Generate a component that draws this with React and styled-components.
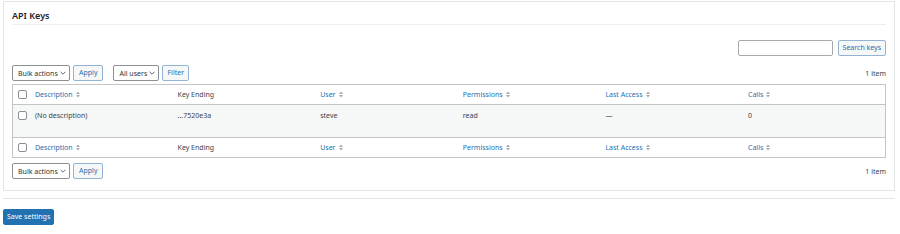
import React from 'react';
import styled, { createGlobalStyle } from 'styled-components';

const GlobalStyle = createGlobalStyle`
  html, body {
    margin: 0;
    padding: 0;
    background: #ffffff;
  }
  body {
    font-family: "Noto Sans", "Open Sans", sans-serif;
    font-size: 7px;
    color: #3c434a;
  }
  * { box-sizing: border-box; }
`;

// STYLES
const Page = styled.div`
  width: 900px;
  padding: 1px 5px 0 3px;
`;

const Panel = styled.div`
  border: 1px solid #e2e4e7;
  background: #ffffff;
  padding: 0 8px 10px 8px;
  height: 190px;
`;

const Heading = styled.h2`
  margin: 0;
  padding: 9px 0 3px 0;
  font-size: 9px;
  font-weight: 600;
  color: #1d2327;
  line-height: 10px;
  border-bottom: 1px solid #eceef0;
`;

const SearchRow = styled.div`
  display: flex;
  justify-content: flex-end;
  gap: 5px;
  margin-top: 15px;
`;

const SearchInput = styled.div`
  width: 95px;
  height: 16px;
  border: 1px solid #a7aaad;
  border-radius: 2px;
  background: #fff;
`;

const Button = styled.button`
  height: 16px;
  padding: 0 ${(p) => p.$pad || 4}px;
  border: 1px solid #93b3d3;
  border-radius: 2px;
  background: #f6f7f7;
  color: #2271b1;
  font-family: inherit;
  font-size: 7px;
  line-height: 14px;
  cursor: pointer;
`;

const PrimaryButton = styled(Button)`
  background: #2271b1;
  border-color: #2271b1;
  color: #ffffff;
`;

const TableNav = styled.div`
  display: flex;
  align-items: center;
  height: 16px;
  margin-top: ${(p) => p.$top}px;
`;

const Group = styled.div`
  display: flex;
  gap: 3px;
  margin-right: 10px;
`;

const Select = styled.div`
  display: flex;
  align-items: center;
  justify-content: space-between;
  width: ${(p) => p.$w}px;
  height: 16px;
  padding: 0 3px 0 5px;
  border: 1px solid #8c8f94;
  border-radius: 2px;
  background: #fff;
  color: #2c3338;
  font-size: 7px;
`;

const Count = styled.span`
  margin-left: auto;
  color: #3c434a;
`;

const Table = styled.div`
  margin-top: 3px;
  border: 1px solid #c3c4c7;
`;

const Row = styled.div`
  display: grid;
  grid-template-columns: 22px repeat(5, 142.6px) 1fr;
  align-items: ${(p) => (p.$body ? 'start' : 'center')};
  height: ${(p) => p.$h}px;
  padding-top: ${(p) => (p.$body ? 6 : 0)}px;
  background: ${(p) => (p.$body ? '#f6f7f7' : '#ffffff')};
  border-top: ${(p) => (p.$divider ? '1px solid #c3c4c7' : 'none')};
  border-bottom: ${(p) => (p.$head ? '1px solid #c3c4c7' : 'none')};
`;

const CheckCell = styled.div`
  display: flex;
  padding-left: 5px;
`;

const Checkbox = styled.span`
  display: block;
  width: 9px;
  height: 9px;
  border: 1px solid #8c8f94;
  border-radius: 2px;
  background: #fff;
`;

const Cell = styled.div`
  color: #3c434a;
  white-space: nowrap;
`;

const SortLink = styled.span`
  display: inline-flex;
  align-items: center;
  gap: 3px;
  color: #2271b1;
`;

const Footer = styled.div`
  margin-top: 7px;
  border-top: 1px solid #e2e4e7;
  padding-top: 10px;
`;

// COMPONENTS
const Chevron = () => (
  <svg width="6" height="4" viewBox="0 0 6 4">
    <path d="M0.6 0.8 L3 3.2 L5.4 0.8" fill="none" stroke="#50575e" strokeWidth="0.9" />
  </svg>
);

const SortIcon = () => (
  <svg width="4" height="7" viewBox="0 0 4 7">
    <path d="M0 3 L2 0.4 L4 3 Z" fill="#a7aaad" />
    <path d="M0 4 L2 6.6 L4 4 Z" fill="#a7aaad" />
  </svg>
);

const columns = [
  { label: 'Description', sortable: true },
  { label: 'Key Ending', sortable: false },
  { label: 'User', sortable: true },
  { label: 'Permissions', sortable: true },
  { label: 'Last Access', sortable: true },
  { label: 'Calls', sortable: true },
];

const rows = [
  { desc: '(No description)', key: '...7520e3a', user: 'steve', perms: 'read', last: '—', calls: '0' },
];

const HeaderRow = ({ head, divider }) => (
  <Row $h={20} $head={head} $divider={divider}>
    <CheckCell>
      <Checkbox />
    </CheckCell>
    {columns.map((c) => (
      <Cell key={c.label}>
        {c.sortable ? (
          <SortLink>
            {c.label}
            <SortIcon />
          </SortLink>
        ) : (
          c.label
        )}
      </Cell>
    ))}
  </Row>
);

const BulkActions = () => (
  <Group>
    <Select $w={58}>
      Bulk actions <Chevron />
    </Select>
    <Button $pad={5}>Apply</Button>
  </Group>
);

const App = () => (
  <>
    <GlobalStyle />
    <Page>
      <Panel>
        <Heading>API Keys</Heading>

        <SearchRow>
          <SearchInput />
          <Button>Search keys</Button>
        </SearchRow>

        <TableNav $top={9}>
          <BulkActions />
          <Group>
            <Select $w={46}>
              All users <Chevron />
            </Select>
            <Button>Filter</Button>
          </Group>
          <Count>1 item</Count>
        </TableNav>

        <Table>
          <HeaderRow head />
          {rows.map((r) => (
            <Row key={r.key} $h={32} $body>
              <CheckCell>
                <Checkbox />
              </CheckCell>
              <Cell>{r.desc}</Cell>
              <Cell>{r.key}</Cell>
              <Cell>{r.user}</Cell>
              <Cell>{r.perms}</Cell>
              <Cell>{r.last}</Cell>
              <Cell>{r.calls}</Cell>
            </Row>
          ))}
          <HeaderRow divider />
        </Table>

        <TableNav $top={5}>
          <BulkActions />
          <Count>1 item</Count>
        </TableNav>
      </Panel>

      <Footer>
        <PrimaryButton $pad={3}>Save settings</PrimaryButton>
      </Footer>
    </Page>
  </>
);

export default App;
